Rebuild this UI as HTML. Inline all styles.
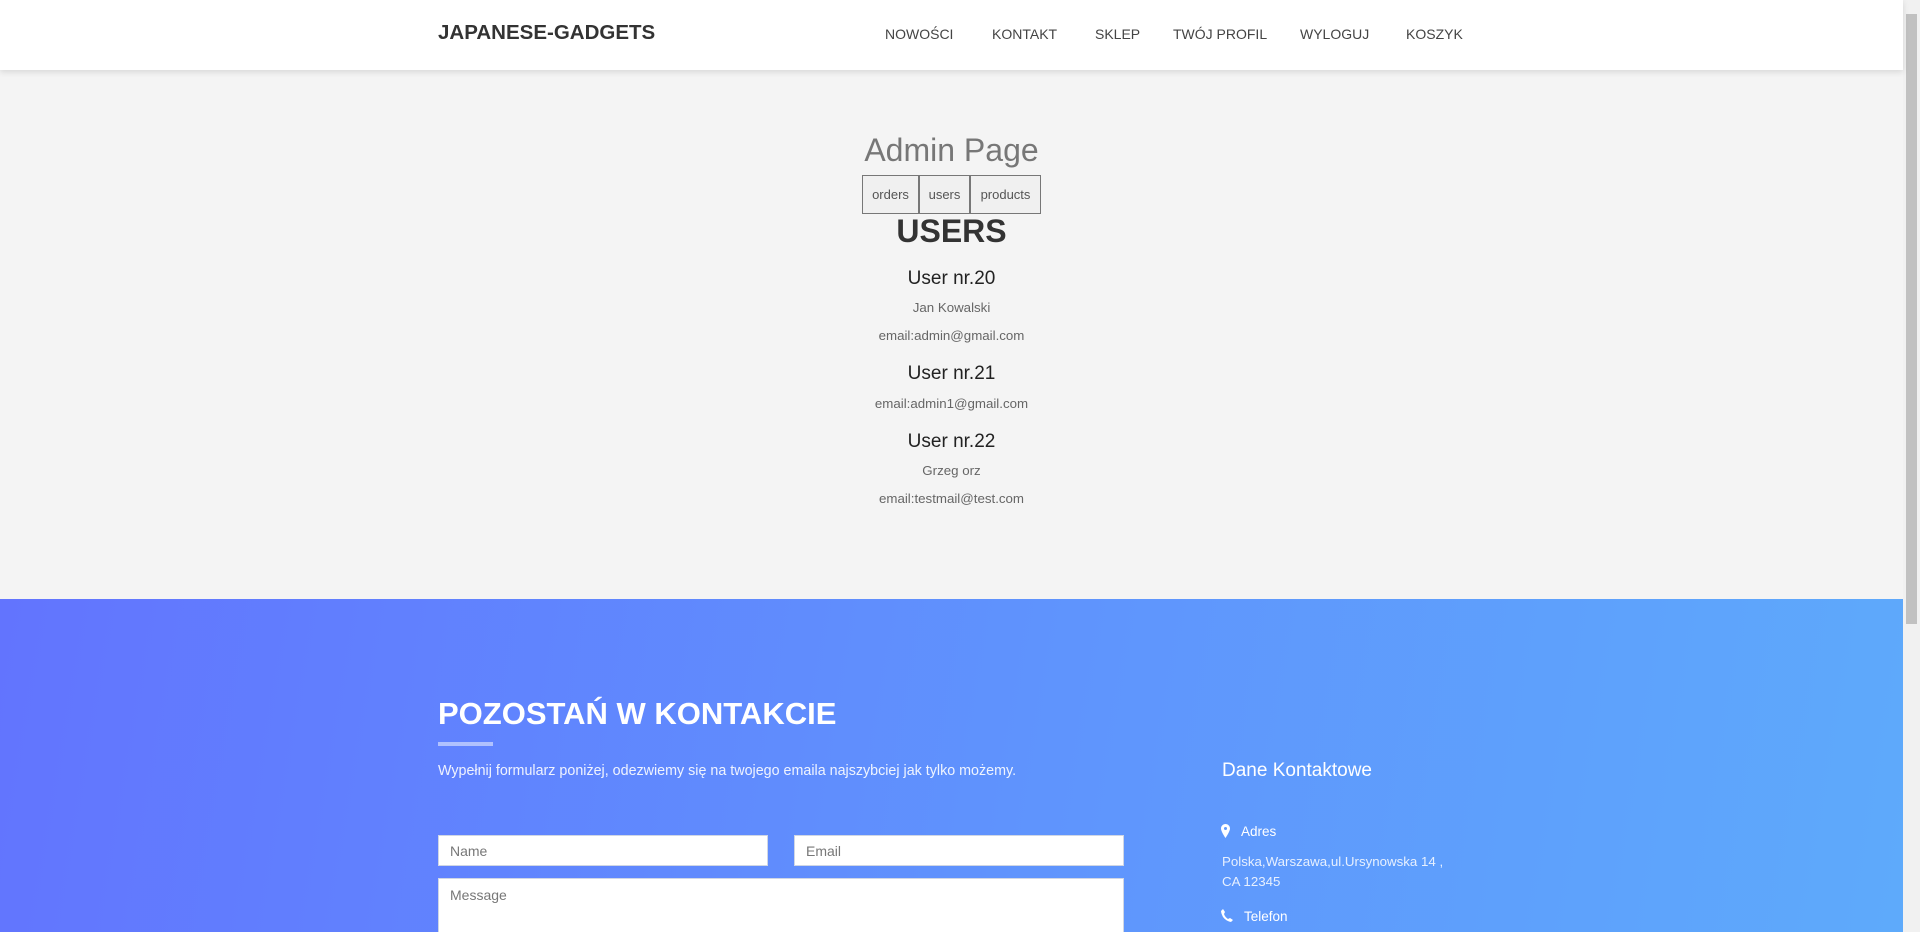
<!DOCTYPE html>
<html><head><meta charset="utf-8"><style>
*{box-sizing:border-box;margin:0;padding:0}
html,body{width:1920px;height:932px;overflow:hidden}
body{font-family:"Liberation Sans",sans-serif;background:#f4f4f4;position:relative}
.nav{position:absolute;left:0;top:0;width:1903px;height:70px;background:#fff;box-shadow:0 2px 6px rgba(0,0,0,.12);z-index:2}
.logo{position:absolute;left:438px;top:21px;font-size:20.5px;font-weight:bold;color:#333}
.nav a{position:absolute;top:26px;font-size:14px;color:#444;text-decoration:none}
.c{position:absolute;left:0;width:1903px;text-align:center}
.btns{position:absolute;left:862px;top:175px;display:flex}
.btns div{border:1px solid #777;background:#f0f0f0;height:39px;line-height:37px;font-size:13px;color:#555;text-align:center}
.blue{position:absolute;top:599px;left:0;width:1903px;height:333px;overflow:hidden;background:linear-gradient(100deg,#6274fe 0%,#5f94fd 55%,#5eaafb 100%)}
.sb{position:absolute;right:0;top:0;width:17px;height:932px;background:#f1f1f1}
.sb div{position:absolute;left:3px;top:14px;width:11px;height:610px;background:#c1c1c1}
input,.msg{position:absolute;background:#fff;border:1px solid #cfd6e4;font-size:14px;color:#777;padding-left:11px;font-family:"Liberation Sans",sans-serif}
.w{color:#fff;position:absolute}
</style></head><body>
<div class="nav">
<div class="logo">JAPANESE-GADGETS</div>
<a style="left:885px">NOWOŚCI</a><a style="left:992px">KONTAKT</a><a style="left:1095px">SKLEP</a><a style="left:1173px">TWÓJ PROFIL</a><a style="left:1300px">WYLOGUJ</a><a style="left:1406px">KOSZYK</a>
</div>
<div class="c" style="top:132px;font-size:32px;color:#777">Admin Page</div>
<div class="btns"><div style="width:57px">orders</div><div style="width:51px">users</div><div style="width:71px">products</div></div>
<div class="c" style="top:213px;font-size:32px;font-weight:bold;color:#333">USERS</div>
<div class="c" style="top:268px;font-size:19px;color:#222">User nr.20</div>
<div class="c" style="top:300px;font-size:13.3px;color:#666">Jan Kowalski</div>
<div class="c" style="top:328px;font-size:13.3px;color:#666">email:admin@gmail.com</div>
<div class="c" style="top:363px;font-size:19px;color:#222">User nr.21</div>
<div class="c" style="top:396px;font-size:13.3px;color:#666">email:admin1@gmail.com</div>
<div class="c" style="top:431px;font-size:19px;color:#222">User nr.22</div>
<div class="c" style="top:463px;font-size:13.3px;color:#666">Grzeg orz</div>
<div class="c" style="top:491px;font-size:13.3px;color:#666">email:testmail@test.com</div>
<div class="blue">
<div class="w" style="left:438px;top:97px;font-size:31px;font-weight:bold">POZOSTAŃ W KONTAKCIE</div>
<div style="position:absolute;left:438px;top:143px;width:55px;height:4px;background:rgba(255,255,255,.5)"></div>
<div class="w" style="left:438px;top:164px;font-size:14.3px;opacity:.9">Wypełnij formularz poniżej, odezwiemy się na twojego emaila najszybciej jak tylko możemy.</div>
<div class="w" style="left:1222px;top:161px;font-size:19px">Dane Kontaktowe</div>
<input style="left:438px;top:236px;width:330px;height:31px" value="Name">
<input style="left:794px;top:236px;width:330px;height:31px" value="Email">
<div class="msg" style="left:438px;top:279px;width:686px;height:80px;padding-top:8px">Message</div>
<svg class="w" style="left:1221px;top:225px" width="9" height="14" viewBox="0 0 9 14"><path d="M4.5 0C2 0 0 2 0 4.5 0 7.5 4.5 14 4.5 14S9 7.5 9 4.5C9 2 7 0 4.5 0z M4.5 3a1.5 1.5 0 1 1 0 3 1.5 1.5 0 0 1 0-3z" fill="#fff" fill-rule="evenodd"/></svg>
<div class="w" style="left:1241px;top:225px;font-size:13.5px">Adres</div>
<div class="w" style="left:1222px;top:253px;font-size:13.3px;line-height:20px;opacity:.85">Polska,Warszawa,ul.Ursynowska 14 ,<br>CA 12345</div>
<svg class="w" style="left:1221px;top:310px" width="12" height="13" viewBox="0 0 12 13"><path d="M2 0L4 3 3 5Q4 8 7 10L9 9 12 11 10 13Q5 12 2 8 0 4 0 2z" fill="#fff"/></svg>
<div class="w" style="left:1244px;top:310px;font-size:13.5px">Telefon</div>
</div>
<div class="sb"><div></div></div>
</body></html>
